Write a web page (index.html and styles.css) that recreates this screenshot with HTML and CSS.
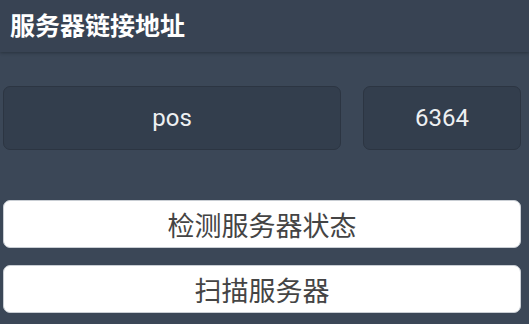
FILE: index.html
```html
<!DOCTYPE html>
<html lang="zh">
<head>
<meta charset="utf-8">
<link rel="stylesheet" href="styles.css">
</head>
<body>
<div class="header">服务器链接地址</div>
<div class="content">
  <div class="row">
    <div class="field host">pos</div>
    <div class="field port">6364</div>
  </div>
  <div class="buttons">
    <div class="btn">检测服务器状态</div>
    <div class="btn">扫描服务器</div>
  </div>
</div>
</body>
</html>
```
FILE: styles.css
```css
html, body {
  margin: 0;
  padding: 0;
  background: #3b4757;
  width: 529px;
  height: 324px;
  overflow: hidden;
}
.header {
  height: 52px;
  box-sizing: border-box;
  padding-left: 10px;
  display: flex;
  align-items: center;
  background: #384353;
  color: #ffffff;
  font-family: "Noto Sans CJK SC", sans-serif;
  font-weight: bold;
  font-size: 25px;
  line-height: 1;
  padding-bottom: 4px;
  box-shadow: 0 1px 3px rgba(20, 26, 34, 0.45);
  position: relative;
}
.content {
  padding: 34px 8px 0 3px;
}
.row {
  display: flex;
  gap: 22px;
  height: 64px;
}
.field {
  box-sizing: border-box;
  background: #333e4d;
  border: 1px solid #2c3542;
  border-radius: 7px;
  display: flex;
  align-items: center;
  justify-content: center;
  color: #eef0f2;
  font-family: Roboto, "Noto Sans", sans-serif;
  font-size: 24px;
}
.host {
  flex: 1;
}
.port {
  width: 158px;
}
.buttons {
  margin-top: 50px;
  display: flex;
  flex-direction: column;
  gap: 17px;
}
.btn {
  height: 48px;
  box-sizing: border-box;
  background: #ffffff;
  border: 1px solid #c9ced4;
  border-radius: 7px;
  display: flex;
  align-items: center;
  justify-content: center;
  color: #444444;
  font-family: "Noto Sans CJK SC", sans-serif;
  font-size: 27px;
  line-height: 1;
}
```
